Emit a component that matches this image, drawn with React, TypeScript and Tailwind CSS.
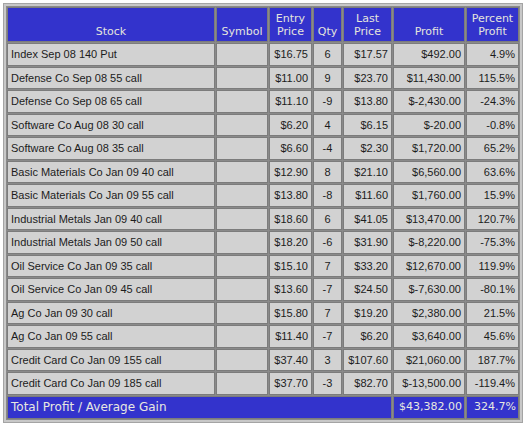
const rows: string[][] = [
  ['Index Sep 08 140 Put', '$16.75', '6', '$17.57', '$492.00', '4.9%'],
  ['Defense Co Sep 08 55 call', '$11.00', '9', '$23.70', '$11,430.00', '115.5%'],
  ['Defense Co Sep 08 65 call', '$11.10', '-9', '$13.80', '$-2,430.00', '-24.3%'],
  ['Software Co Aug 08 30 call', '$6.20', '4', '$6.15', '$-20.00', '-0.8%'],
  ['Software Co Aug 08 35 call', '$6.60', '-4', '$2.30', '$1,720.00', '65.2%'],
  ['Basic Materials Co Jan 09 40 call', '$12.90', '8', '$21.10', '$6,560.00', '63.6%'],
  ['Basic Materials Co Jan 09 55 call', '$13.80', '-8', '$11.60', '$1,760.00', '15.9%'],
  ['Industrial Metals Jan 09 40 call', '$18.60', '6', '$41.05', '$13,470.00', '120.7%'],
  ['Industrial Metals Jan 09 50 call', '$18.20', '-6', '$31.90', '$-8,220.00', '-75.3%'],
  ['Oil Service Co Jan 09 35 call', '$15.10', '7', '$33.20', '$12,670.00', '119.9%'],
  ['Oil Service Co Jan 09 45 call', '$13.60', '-7', '$24.50', '$-7,630.00', '-80.1%'],
  ['Ag Co Jan 09 30 call', '$15.80', '7', '$19.20', '$2,380.00', '21.5%'],
  ['Ag Co Jan 09 55 call', '$11.40', '-7', '$6.20', '$3,640.00', '45.6%'],
  ['Credit Card Co Jan 09 155 call', '$37.40', '3', '$107.60', '$21,060.00', '187.7%'],
  ['Credit Card Co Jan 09 185 call', '$37.70', '-3', '$82.70', '$-13,500.00', '-119.4%'],
];

const th = 'border border-[#7c7c7c] bg-[#3333cc] text-[#e4e4dc] font-normal text-[11px] leading-[13px] align-bottom text-center px-[2px] pb-[3px]';
const td = 'border border-[#7c7c7c] bg-[#d2d2d2] text-[#1c1c1c] text-[11px] h-[22.5px] px-[3px] whitespace-nowrap';
const tot = 'border border-[#7c7c7c] bg-[#3333cc] text-[#e8e8e0] h-[23px] whitespace-nowrap';

export default function App() {
  return (
    <div className="min-h-screen bg-white pl-[3px] pt-[3px]">
      <div className="w-[520px] border border-[#a4a4a4] bg-[#c8c8c8] p-[2px]">
        <table
          className="table-fixed w-full border-separate border-spacing-[1px] bg-[#8a8a8a] font-['Liberation_Sans',Arial,sans-serif]"
        >
          <thead className="font-['DejaVu_Sans',Verdana,sans-serif]">
            <tr>
              <th className={`${th} w-[208px] h-[35px]`}>Stock</th>
              <th className={`${th} w-[52px]`}>Symbol</th>
              <th className={`${th} w-[43px]`}>Entry<br />Price</th>
              <th className={`${th} w-[29px]`}>Qty</th>
              <th className={`${th} w-[49px]`}>Last<br />Price</th>
              <th className={`${th} w-[72px]`}>Profit</th>
              <th className={`${th} w-[53px]`}>Percent<br />Profit</th>
            </tr>
          </thead>
          <tbody>
            {rows.map((r) => (
              <tr key={r[0]}>
                <td className={`${td} text-left`}>{r[0]}</td>
                <td className={td}></td>
                <td className={`${td} text-right`}>{r[1]}</td>
                <td className={`${td} text-center`}>{r[2]}</td>
                <td className={`${td} text-right`}>{r[3]}</td>
                <td className={`${td} text-right`}>{r[4]}</td>
                <td className={`${td} text-right`}>{r[5]}</td>
              </tr>
            ))}
            <tr className="font-['DejaVu_Sans',Verdana,sans-serif]">
              <td colSpan={5} className={`${tot} text-left text-[12px] px-[3px]`}>Total Profit / Average Gain</td>
              <td className={`${tot} text-right text-[11px] px-[2px]`}>$43,382.00</td>
              <td className={`${tot} text-right text-[11px] px-[2px]`}>324.7%</td>
            </tr>
          </tbody>
        </table>
      </div>
    </div>
  );
}
